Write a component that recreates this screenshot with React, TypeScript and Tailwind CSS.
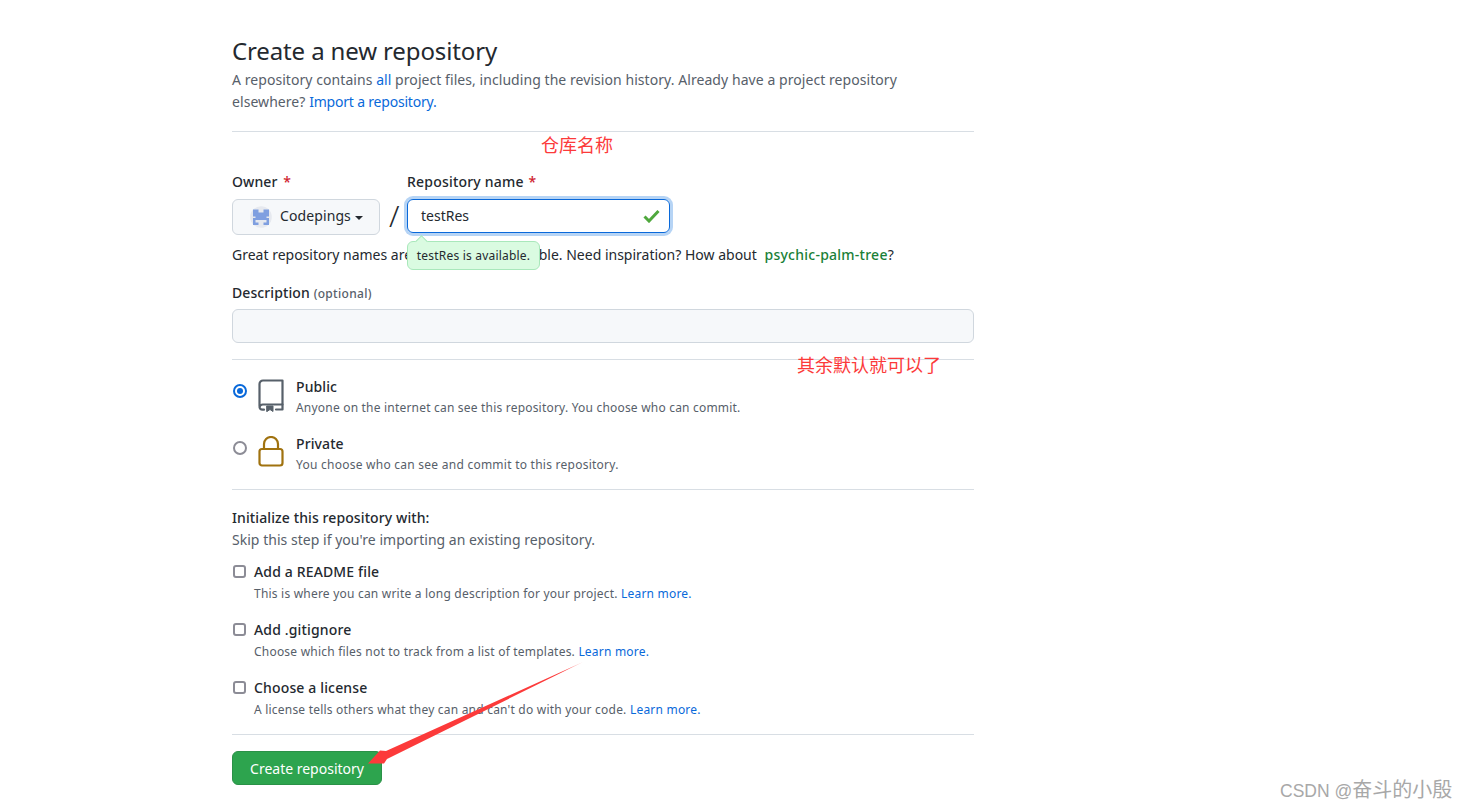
const font = '[font-family:"Noto_Sans","Noto_Sans_CJK_SC",sans-serif]';

function RepoIcon() {
  return (
    <svg width="26" height="33" viewBox="0 0 26 33" fill="none" stroke="#57606a" strokeWidth="2.2" strokeLinecap="round" strokeLinejoin="round">
      <path d="M1.5 27V5a3.5 3.5 0 0 1 3.5-3.5h19.5v24H5a3.5 3.5 0 0 0-3.5 2.5 3 3 0 0 0 3 2.7h1.5" />
      <path d="M18 30.5h6.5v-5" />
      <path d="M9 27h6v5.5l-3-2-3 2z" fill="#57606a" strokeWidth="1" />
    </svg>
  );
}

function LockIcon() {
  return (
    <svg width="26" height="31" viewBox="0 0 26 31" fill="none" stroke="#a0720f" strokeWidth="2.2" strokeLinejoin="round">
      <path d="M6 13V8a7 7 0 0 1 14 0v5" />
      <rect x="1.5" y="13" width="23" height="16.5" rx="2.5" />
    </svg>
  );
}

function Visibility({ title, text, checked, icon, textClass }: { title: string; text: string; checked?: boolean; icon: React.ReactNode; textClass: string }) {
  return (
    <div className="flex h-[43px]">
      <div className="w-[26px] pl-[1px]">
        {checked ? (
          <div className="w-[14px] h-[14px] rounded-full border-2 border-[#0969da] flex items-center justify-center">
            <div className="w-[6px] h-[6px] rounded-full bg-[#0969da]" />
          </div>
        ) : (
          <div className="w-[14px] h-[14px] rounded-full border-2 border-[#8c8c96]" />
        )}
      </div>
      <div className="w-[38px] -mt-[5px]">{icon}</div>
      <div>
        <div className="text-[14px] leading-[20px] font-medium tracking-[0.1px] text-[#24292f] -mt-[7px]">{title}</div>
        <div className={`text-[12px] leading-[20px] text-[#57606a] mt-[1px] ${textClass}`}>{text}</div>
      </div>
    </div>
  );
}

function Option({ title, text, link }: { title: string; text: string; link: string }) {
  return (
    <div className="flex h-[58px]">
      <div className="w-[22px] pl-[1px] pt-[3px]">
        <div className="w-[13px] h-[13px] rounded-[3px] border-2 border-[#8c8c96] bg-white" />
      </div>
      <div>
        <div className="text-[14px] leading-[20px] font-medium tracking-[0.15px] text-[#24292f]">{title}</div>
        <div className="text-[12px] leading-[20px] tracking-[0.21px] text-[#57606a] mt-[2px]">
          {text} <span className="text-[#0969da]">{link}</span>
        </div>
      </div>
    </div>
  );
}

export default function App() {
  return (
    <div className={`${font} relative w-[1467px] h-[809px] overflow-hidden bg-white`}>
      <div className="ml-[232px] w-[742px] pt-[35px]">
        <h1 className="text-[24px] leading-[32px] font-normal tracking-[-0.13px] text-[#24292f]">Create a new repository</h1>
        <p className="text-[14px] leading-[22px] tracking-[0.06px] text-[#57606a] mt-[2px] w-[690px]">
          A repository contains <span className="text-[#0969da]">all</span> project files, including the revision history. Already have a project repository elsewhere? <span className="text-[#0969da] tracking-[-0.2px]">Import a repository.</span>
        </p>
        <hr className="mt-[18px] border-[#d8dee4]" />

        <div className="flex mt-[40px]">
          <div className="w-[148px]">
            <div className="text-[14px] leading-[20px] font-medium tracking-[0.1px] text-[#24292f]">Owner <span className="text-[#cf222e] ml-[2px]">*</span></div>
            <div className="mt-[7px] h-[36px] rounded-[6px] border border-[#d0d7de] bg-[#f6f8fa] flex items-center pl-[17px]">
              <svg width="22" height="22" viewBox="0 0 22 22" className="mr-[8px]">
                <circle cx="11" cy="11" r="10.8" fill="#e6e9ef" />
                <path d="M3 3.5h5.5v3h5v-3H19v7h-2.500v1.500H19v7h-5.500v-2.500h3V14H5.500v2.500h3V19H3v-7h2.500v-1.500H3z" fill="#7f9fe0" />
                <rect x="8" y="9" width="6" height="3" fill="#7f9fe0" />
              </svg>
              <span className="text-[14px] tracking-[0.1px] text-[#24292f] -mt-[3px]">Codepings</span>
              <span className="ml-[4px] mt-[2px] border-x-[4px] border-x-transparent border-t-[4px] border-t-[#24292f]" />
            </div>
          </div>
          <div className="w-[27px] pt-[26px] pl-[9px] text-[30px] font-light leading-[36px] text-[#24292f]">/</div>
          <div className="w-[263px]">
            <div className="text-[14px] leading-[20px] font-medium tracking-[0.2px] text-[#24292f]">Repository name <span className="text-[#cf222e] ml-[1px]">*</span></div>
            <div className="mt-[7px] h-[34px] rounded-[6px] border border-[#0969da] ring-[3px] ring-[#b6d4f5] flex items-center justify-between pl-[13px] pr-[9px]">
              <span className="text-[14px] text-[#24292f] -mt-[2px]">testRes</span>
              <svg width="17" height="14" viewBox="0 0 17 14" fill="none" stroke="#4fa83d" strokeWidth="3" className="-mt-[1px]">
                <path d="M1.5 7.5 6 12 15.500 2" />
              </svg>
            </div>
          </div>
        </div>

        <div className="relative text-[14px] leading-[20px] text-[#24292f] mt-[10px]">
          Great repository names are short and memorable. Need inspiration? How about <span className="text-[#1a7f37] font-medium tracking-[0.25px] ml-[4px]">psychic-palm-tree</span>?
          <div className="absolute left-[175px] -top-[4px] w-[133px] h-[29px] rounded-[6px] border border-[#a9e8bb] bg-[#dafbe1] flex items-center justify-center text-[12px] tracking-[0.2px] text-[#24292f]">
            <div className="absolute left-[9px] -top-[5px] w-[9px] h-[9px] rotate-45 bg-[#dafbe1] border-l border-t border-[#a9e8bb]" />
            testRes is available.
          </div>
        </div>

        <div className="text-[14px] leading-[20px] font-medium tracking-[0.1px] text-[#24292f] mt-[18px]">
          Description <span className="text-[12px] tracking-[0.3px] text-[#57606a]">(optional)</span>
        </div>
        <div className="mt-[5px] h-[34px] rounded-[6px] border border-[#d0d7de] bg-[#f6f8fa]" />
        <hr className="mt-[16px] border-[#d8dee4]" />

        <div className="mt-[24px] h-[114px]">
          <div className="h-[57px]"><Visibility title="Public" text="Anyone on the internet can see this repository. You choose who can commit." checked icon={<RepoIcon />} textClass="tracking-[0.2px]" /></div>
          <Visibility title="Private" text="You choose who can see and commit to this repository." icon={<LockIcon />} textClass="tracking-[0.25px]" />
        </div>
        <hr className="-mt-[9px] border-[#d8dee4]" />

        <div className="text-[14px] leading-[20px] font-medium tracking-[0.1px] text-[#24292f] mt-[18px]">Initialize this repository with:</div>
        <div className="text-[14px] leading-[22px] tracking-[0.03px] text-[#57606a] mt-[1px]">Skip this step if you're importing an existing repository.</div>

        <div className="mt-[11px]">
          <Option title="Add a README file" text="This is where you can write a long description for your project." link="Learn more." />
          <Option title="Add .gitignore" text="Choose which files not to track from a list of templates." link="Learn more." />
          <Option title="Choose a license" text="A license tells others what they can and can't do with your code." link="Learn more." />
        </div>
        <hr className="-mt-[2px] border-[#d8dee4]" />

        <button className="mt-[16px] w-[150px] h-[34px] rounded-[6px] bg-[#2da44e] border border-[#2a9147] text-[14px] text-white">Create repository</button>
      </div>

      <div className="absolute left-[541px] top-[134px] text-[18px] leading-[22px] text-[#fc3a3a]">仓库名称</div>
      <div className="absolute left-[797px] top-[354px] text-[18px] leading-[22px] text-[#fc3a3a]">其余默认就可以了</div>

      <svg className="absolute left-0 top-0 pointer-events-none" width="1467" height="809" viewBox="0 0 1467 809">
        <defs>
          <linearGradient id="arrowFade" x1="583" y1="662" x2="370" y2="763" gradientUnits="userSpaceOnUse">
            <stop offset="0" stopColor="#fc3a3a" stopOpacity="0.5" />
            <stop offset="0.1" stopColor="#fc3a3a" />
          </linearGradient>
        </defs>
        <path d="M583 662 386 751 380 750.500 368 763.500 384 763.500 387 759z" fill="url(#arrowFade)" />
      </svg>

      <div className="absolute left-[1280px] top-[777px] leading-[26px] text-[#a8a8a8] text-[17.5px] [font-family:'Liberation_Sans','Noto_Sans_CJK_SC',sans-serif]">
        CSDN @<span className="text-[20px]">奋斗的小殷</span>
      </div>
    </div>
  );
}
